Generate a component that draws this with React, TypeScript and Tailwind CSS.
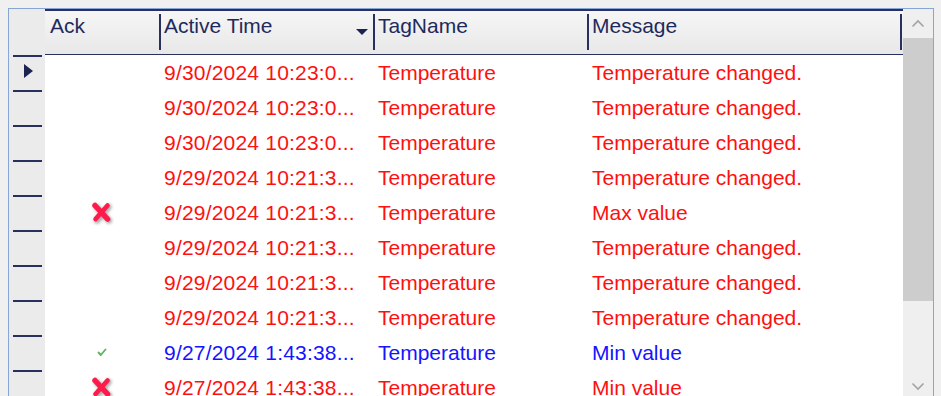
import React from "react";

type Ack = "none" | "unack" | "ack";

type AlarmRow = {
  ack: Ack;
  time: string;
  tag: string;
  message: string;
  color: "red" | "blue";
};

const ROWS: AlarmRow[] = [
  { ack: "none", time: "9/30/2024 10:23:0...", tag: "Temperature", message: "Temperature changed.", color: "red" },
  { ack: "none", time: "9/30/2024 10:23:0...", tag: "Temperature", message: "Temperature changed.", color: "red" },
  { ack: "none", time: "9/30/2024 10:23:0...", tag: "Temperature", message: "Temperature changed.", color: "red" },
  { ack: "none", time: "9/29/2024 10:21:3...", tag: "Temperature", message: "Temperature changed.", color: "red" },
  { ack: "unack", time: "9/29/2024 10:21:3...", tag: "Temperature", message: "Max value", color: "red" },
  { ack: "none", time: "9/29/2024 10:21:3...", tag: "Temperature", message: "Temperature changed.", color: "red" },
  { ack: "none", time: "9/29/2024 10:21:3...", tag: "Temperature", message: "Temperature changed.", color: "red" },
  { ack: "none", time: "9/29/2024 10:21:3...", tag: "Temperature", message: "Temperature changed.", color: "red" },
  { ack: "ack", time: "9/27/2024 1:43:38...", tag: "Temperature", message: "Min value", color: "blue" },
  { ack: "unack", time: "9/27/2024 1:43:38...", tag: "Temperature", message: "Min value", color: "red" },
];

const CrossIcon = () => (
  <svg width="26" height="26" viewBox="0 0 26 26">
    <defs>
      <filter id="xblur" x="-40%" y="-40%" width="180%" height="180%">
        <feGaussianBlur stdDeviation="1.8" />
      </filter>
    </defs>
    {/* shadow */}
    <g filter="url(#xblur)" stroke="#8c8c8c" strokeWidth="6" strokeLinecap="round" opacity="0.75">
      <path d="M7.5 7 L20 20.5" />
      <path d="M19.5 7 L8 20.5" />
    </g>
    <g stroke="#ff1a4b" strokeLinecap="round">
      <path d="M6 5.5 L18.5 19" strokeWidth="5.5" />
      <path d="M18.5 5.5 L6.5 19" strokeWidth="4.5" />
    </g>
  </svg>
);

const CheckIcon = () => (
  <svg width="10" height="9" viewBox="0 0 10 9">
    <path d="M1.5 4.5 L3.8 7 L8.5 1.5" fill="none" stroke="#5cb85c" strokeWidth="1.9" strokeLinecap="round" strokeLinejoin="round" />
  </svg>
);

const HeaderDivider = () => <div className="w-[2px] h-[36px] bg-[#27305e] mt-[3px] shrink-0" />;

const App = () => {
  return (
    <div
      className="w-[941px] h-[396px] bg-[#f0f0f0] overflow-hidden pt-2 pl-2"
      style={{ fontFamily: '"Liberation Sans", Arial, sans-serif' }}
    >
      <div className="w-[926px] h-[390px] border border-[#86a6d6] flex bg-white">

        {/* Row selectors */}
        <div className="w-[36px] bg-[#ebebeb] flex flex-col shrink-0">
          <div className="h-[46px] shrink-0" />
          {ROWS.map((_, i) => (
            <div key={i} className="h-[35px] shrink-0 flex flex-col">
              <div className="w-[29px] h-[2px] bg-[#27305e] ml-[4px]" />
              {i === 0 && (
                <div className="mt-[7px] ml-[15px] w-0 h-0 border-y-[7px] border-y-transparent border-l-[9px] border-l-[#1b2350]" />
              )}
            </div>
          ))}
        </div>

        {/* Grid */}
        <div className="w-[858px] flex flex-col shrink-0 text-[21px] leading-[24px]">
          {/* Header */}
          <div className="h-[46px] shrink-0 flex border-t-2 border-b border-[#27305e] bg-gradient-to-b from-[#f6f6f6] to-[#e8e8e8] text-[#1f2a5c]">
            <div className="w-[114px] pl-[5px] pt-[3px]">Ack</div>
            <div className="w-[214px] flex">
              <HeaderDivider />
              <span className="ml-[3px] pt-[3px]">Active Time</span>
              <div className="ml-auto mr-[5px] mt-[18px] w-0 h-0 border-x-[6px] border-x-transparent border-t-[6px] border-t-[#1b2350]" />
            </div>
            <div className="w-[214px] flex">
              <HeaderDivider />
              <span className="ml-[3px] pt-[3px]">TagName</span>
            </div>
            <div className="flex-1 flex">
              <HeaderDivider />
              <span className="ml-[3px] pt-[3px]">Message</span>
              <div className="ml-auto mr-[1px]">
                <HeaderDivider />
              </div>
            </div>
          </div>

          {/* Body */}
          {ROWS.map((row, i) => (
            <div
              key={i}
              className={`h-[35px] shrink-0 flex items-center ${row.color === "blue" ? "text-[#1414ff]" : "text-[#ff1010]"}`}
            >
              <div className="w-[114px] flex justify-center items-center">
                {row.ack === "unack" && <CrossIcon />}
                {row.ack === "ack" && <CheckIcon />}
              </div>
              <div className="w-[214px] pl-[5px] whitespace-nowrap tracking-[0.2px]">{row.time}</div>
              <div className="w-[214px] pl-[5px] whitespace-nowrap">{row.tag}</div>
              <div className="flex-1 pl-[5px] whitespace-nowrap">{row.message}</div>
            </div>
          ))}
        </div>

        {/* Scrollbar */}
        <div className="w-[30px] bg-[#efefef] flex flex-col shrink-0">
          <div className="h-[29px] flex items-center justify-center">
            <svg width="14" height="9" viewBox="0 0 14 9">
              <path d="M1.5 7.5 L7 2 L12.5 7.5" fill="none" stroke="#a3a3a3" strokeWidth="1.6" />
            </svg>
          </div>
          <div className="h-[263px] bg-[#cdcdcd]" />
          <div className="flex-1 flex items-end justify-center pb-[6px]">
            <svg width="14" height="9" viewBox="0 0 14 9">
              <path d="M1.5 1.5 L7 7 L12.5 1.5" fill="none" stroke="#a3a3a3" strokeWidth="1.6" />
            </svg>
          </div>
        </div>
      </div>
    </div>
  );
};

export default App;
